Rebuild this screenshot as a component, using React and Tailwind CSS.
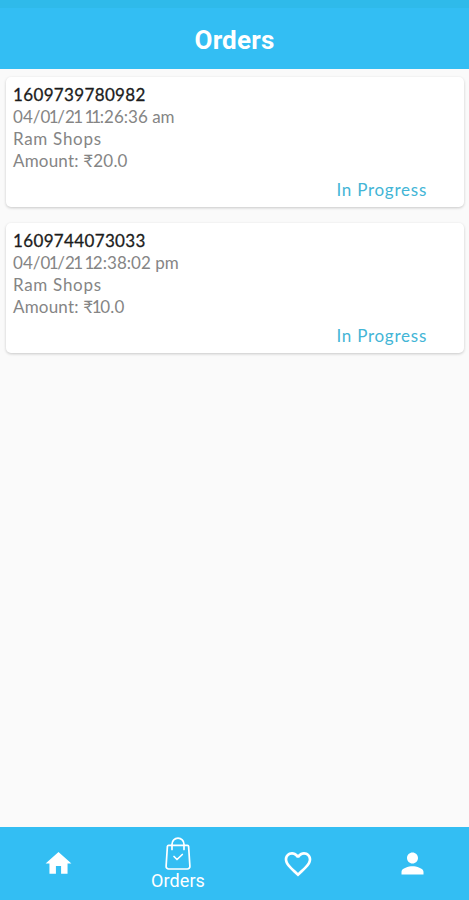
import React from 'react';

const orders = [
  { id: '1609739780982', placedAt: '04/01/21 11:26:36 am', shop: 'Ram Shops', amount: '20.0', status: 'In Progress' },
  { id: '1609744073033', placedAt: '04/01/21 12:38:02 pm', shop: 'Ram Shops', amount: '10.0', status: 'In Progress' },
];

const HomeIcon = () => (
  <svg viewBox="0 0 24 24" className="w-[31px] h-[31px]" fill="currentColor">
    <path d="M10 20v-6h4v6h5v-8h3L12 3 2 12h3v8z" />
  </svg>
);

const BagIcon = () => (
  <svg viewBox="0 0 26 34" className="w-[26px] h-[34px]" fill="none" stroke="currentColor" strokeWidth="1.7" strokeLinecap="round" strokeLinejoin="round">
    <path d="M3.6 8.3h18.8a1.2 1.2 0 0 1 1.2 1.1l1.3 19.8a2.6 2.6 0 0 1-2.6 2.8H3.7a2.6 2.6 0 0 1-2.6-2.8L2.4 9.4a1.2 1.2 0 0 1 1.2-1.1z" />
    <path d="M7 12.5V7.2a6 6 0 0 1 12 0v5.3" />
    <path d="M9 19.5l3 3 5.3-5" />
  </svg>
);

const HeartIcon = () => (
  <svg viewBox="0 0 24 24" className="w-8 h-8" fill="currentColor">
    <path d="M16.5 3c-1.74 0-3.41.81-4.5 2.09C10.91 3.81 9.24 3 7.5 3 4.42 3 2 5.42 2 8.5c0 3.78 3.4 6.86 8.55 11.54L12 21.35l1.45-1.32C18.6 15.36 22 12.28 22 8.5 22 5.42 19.58 3 16.5 3zm-4.4 15.55l-.1.1-.1-.1C7.14 14.24 4 11.39 4 8.5 4 6.5 5.5 5 7.5 5c1.54 0 3.04.99 3.57 2.36h1.87C13.46 5.99 14.96 5 16.5 5c2 0 3.5 1.5 3.5 3.5 0 2.89-3.14 5.74-7.9 10.05z" />
  </svg>
);

const PersonIcon = () => (
  <svg viewBox="0 0 24 24" className="w-[33px] h-[33px]" fill="currentColor">
    <path d="M12 12c2.21 0 4-1.79 4-4s-1.79-4-4-4-4 1.79-4 4 1.79 4 4 4zm0 2c-2.67 0-8 1.34-8 4v2h16v-2c0-2.66-5.33-4-8-4z" />
  </svg>
);

// Tightens the digit 1, which is too widely spaced in tabular figures
function Figures({ text }) {
  return text.split('').map((c, i) => (c === '1' ? <span key={i} className="-ml-[1.5px] tracking-[-1.5px]">1</span> : c));
}

function OrderCard({ order }) {
  return (
    <div className="h-[130px] rounded-[5px] bg-white pl-[7px] pt-1.5 shadow-[0_1px_3px_rgba(0,0,0,0.2)] font-['Lato','Noto_Sans',sans-serif] text-[17px] leading-[22px] text-[#858585]">
      <div className="mt-px tracking-[0.35px] text-[#1c1c1c] [-webkit-text-stroke:0.3px_#1c1c1c]">{order.id}</div>
      <div><Figures text={order.placedAt} /></div>
      <div className="tracking-[0.7px]">{order.shop}</div>
      <div className="tracking-[0.2px]">Amount: ₹<Figures text={order.amount} /></div>
      <div className="mt-[7px] pr-[37px] text-right tracking-[0.75px] text-[#43b5d6]">{order.status}</div>
    </div>
  );
}

export default function App() {
  return (
    <div className="flex h-[900px] w-[469px] flex-col overflow-hidden bg-[#fafafa] font-['Roboto',sans-serif]">
      {/* Status bar strip and header */}
      <div className="h-2 shrink-0 bg-[#2fbaea]" />
      <header className="flex h-[61px] shrink-0 items-center justify-center bg-[#33bef3] pt-0.5">
        <h1 className="text-[26px] font-bold leading-8 tracking-[0.2px] text-white">Orders</h1>
      </header>

      <main className="flex flex-1 flex-col gap-4 pl-1.5 pr-[5px] pt-2">
        {orders.map((o) => <OrderCard key={o.id} order={o} />)}
      </main>

      {/* Bottom navigation */}
      <nav className="flex h-[73px] shrink-0 items-center bg-[#33bef3] text-white">
        <button className="flex w-[116px] justify-center"><HomeIcon /></button>
        <button className="flex w-[124px] flex-col items-center pt-px">
          <BagIcon />
          <span className="text-[18px] leading-5 tracking-[0.1px]">Orders</span>
        </button>
        <button className="flex w-[115px] justify-center"><HeartIcon /></button>
        <button className="flex flex-1 justify-center"><PersonIcon /></button>
      </nav>
    </div>
  );
}
